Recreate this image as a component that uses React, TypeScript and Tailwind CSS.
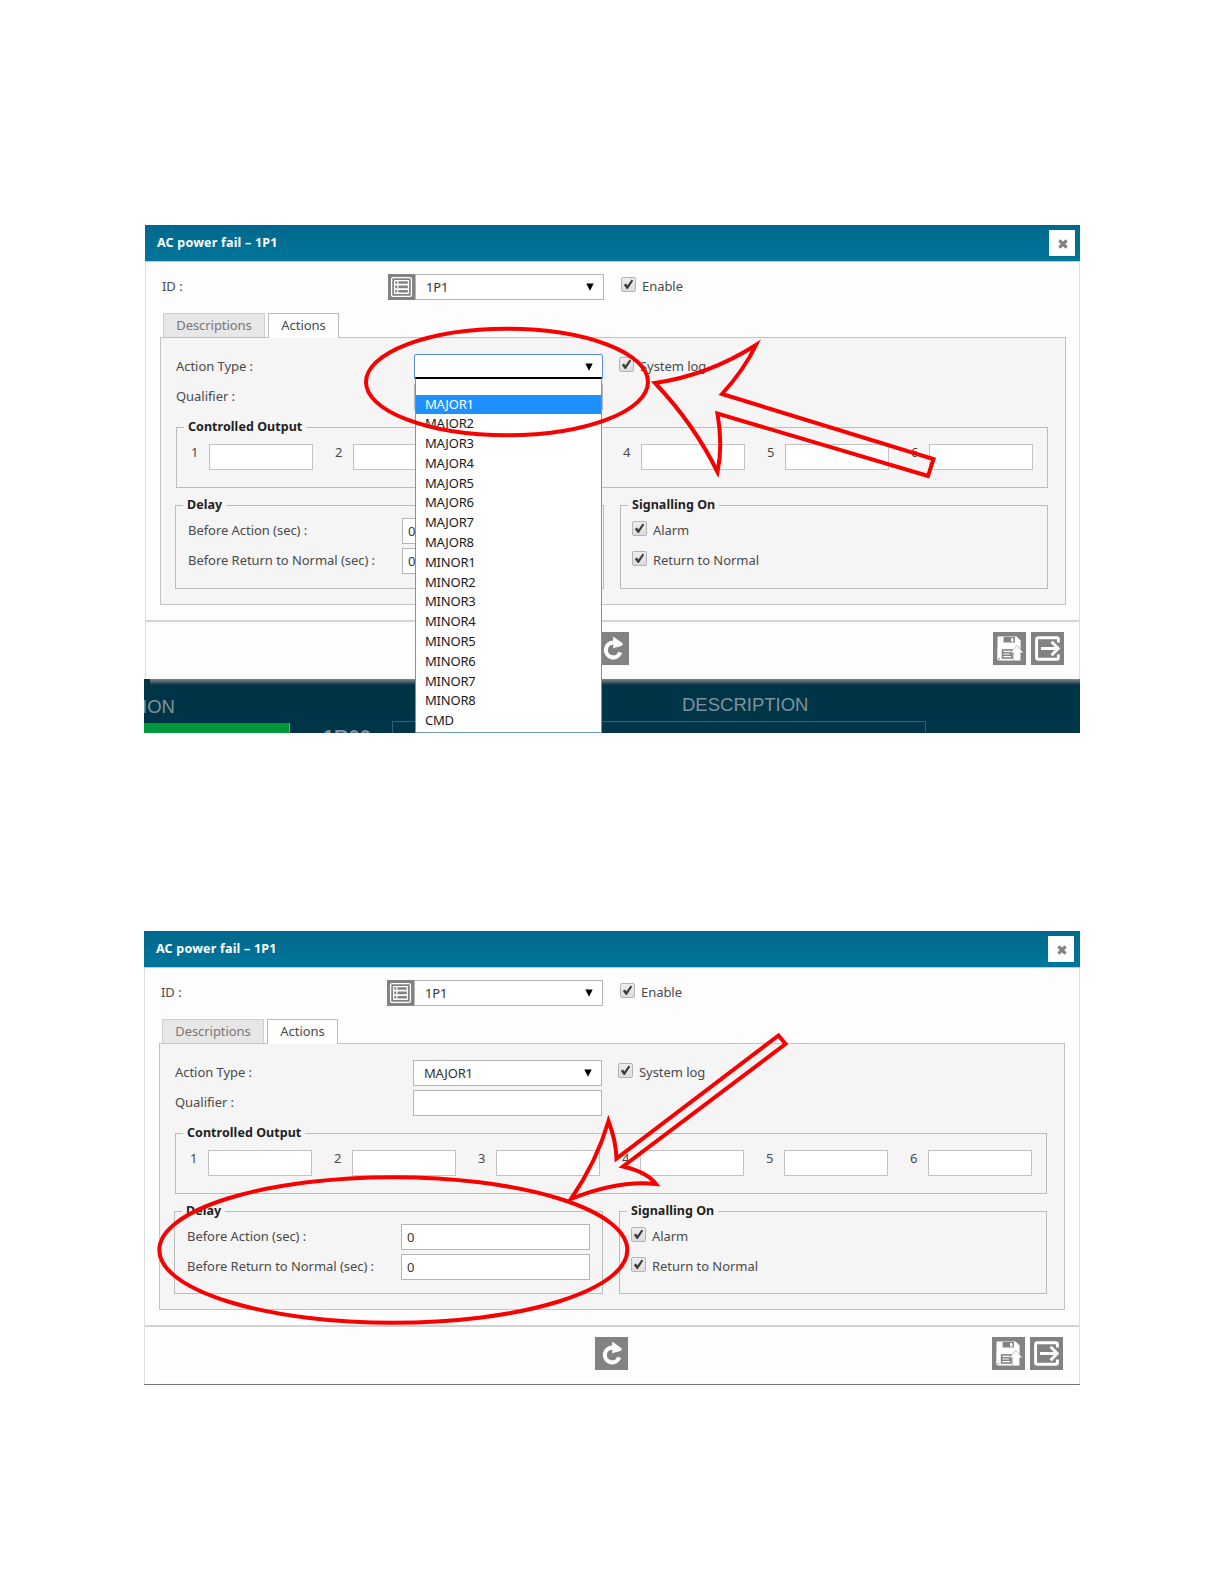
import type { ReactNode } from "react";

const OPTIONS = [
  "MAJOR1", "MAJOR2", "MAJOR3", "MAJOR4", "MAJOR5", "MAJOR6", "MAJOR7", "MAJOR8",
  "MINOR1", "MINOR2", "MINOR3", "MINOR4", "MINOR5", "MINOR6", "MINOR7", "MINOR8", "CMD",
];

function Check({ label }: { label: string }) {
  return (
    <div className="flex h-[26px] items-start gap-[6px]">
      <span className="mt-[3px] flex h-[15px] w-[15px] shrink-0 items-center justify-center rounded-[2px] border border-[#b4b4b4] bg-linear-to-b from-[#eeeeee] to-[#dcdcdc]">
        <svg width="11" height="11" viewBox="0 0 11 11">
          <path d="M0.8 6 L3 4.6 L4.4 6.4 L8.6 0.6 L10.2 1.8 L4.8 10 L3.8 10 Z" fill="#3c3c3c" />
        </svg>
      </span>
      <span className="leading-[25px] whitespace-nowrap">{label}</span>
    </div>
  );
}

function Select({ value, focus, children }: { value: string; focus?: boolean; children?: ReactNode }) {
  return (
    <div
      className={`relative flex h-[26px] w-[189px] items-center justify-between border bg-white pr-[9px] pl-[10px] text-[#333] ${
        focus ? "rounded-[2px] border-[#5b8def]" : "border-[#b5b5b5]"
      }`}
    >
      <span className="pt-px text-[13px] tracking-[-0.2px]">{value}</span>
      <svg width="8" height="8" viewBox="0 0 8 8" className="mb-px">
        <path d="M0.3 0.4 H7.7 L4 7.8 Z" fill="#000" />
      </svg>
      {children}
    </div>
  );
}

function OptionList() {
  return (
    <div className="absolute top-[22px] left-0 z-10 h-[356px] w-[187px] border border-[#6f96c4] border-t-2 border-t-black bg-white pt-[15.5px]">
      {OPTIONS.map((o, i) => (
        <div
          key={o}
          className={`h-[19.8px] pl-[9px] text-[13px] leading-[19.8px] tracking-[-0.2px] ${
            i === 0 ? "bg-[#1e90ff] text-white" : "text-[#1a1a1a]"
          }`}
        >
          {o}
        </div>
      ))}
    </div>
  );
}

function Group({ title, className, children }: { title: string; className: string; children: ReactNode }) {
  return (
    <fieldset className={`border border-[#bcbcbc] ${className}`}>
      <legend className="ml-[7px] h-4 px-[4px] text-[12.5px] leading-4 font-bold tracking-[0.05px] text-[#222]">{title}</legend>
      {children}
    </fieldset>
  );
}

function ListIcon() {
  return (
    <svg width="27" height="26" viewBox="0 0 27 26" className="shrink-0">
      <rect width="27" height="26" fill="#828282" />
      <rect x="3.6" y="3.6" width="19.8" height="18.8" rx="1.5" fill="none" stroke="#fff" strokeWidth="1.3" />
      <rect x="6" y="6" width="15" height="14" rx="1" fill="#fff" />
      <path d="M7.2 7.2h2v2.6h-2z M10.4 7.2h9.4v2.6h-9.4z M7.2 11.6h2v2.6h-2z M10.4 11.6h9.4v2.6h-9.4z M7.2 16h2v2.6h-2z M10.4 16h9.4v2.6h-9.4z" fill="#828282" />
    </svg>
  );
}

function ReloadIcon() {
  return (
    <svg width="33" height="33" viewBox="0 0 33 33">
      <rect width="33" height="33" fill="#828282" />
      <path d="M17.5 10.6 A7.4 7.4 0 1 0 24.2 20.4" fill="none" stroke="#fff" strokeWidth="4.2" />
      <path d="M17.2 4.4 L26.8 11.6 L26 13.8 L17.2 16.2 Z" fill="#fff" />
    </svg>
  );
}

function SaveIcon() {
  return (
    <svg width="33" height="33" viewBox="0 0 33 33">
      <rect width="33" height="33" fill="#828282" />
      <path d="M4.6 4.4 H23.6 L27.6 8.6 V28.4 H5.6 L4.2 27 Z" fill="#fff" />
      <rect x="10.6" y="5" width="11.4" height="5.6" rx="0.6" fill="#828282" />
      <rect x="18" y="6" width="2.6" height="3.8" rx="1" fill="#fff" />
      <rect x="8.8" y="17.2" width="11" height="9.6" fill="#828282" />
      <path d="M10.4 19.4 H18 M10.4 22 H17 M10.4 24.6 H18" stroke="#fff" strokeWidth="1.1" />
      <path d="M23.9 13.4 L30.6 20.8 H27.6 V28.8 H20.6 V20.8 H17.2 Z" fill="#fff" stroke="#828282" strokeWidth="0.5" />
      <rect x="5.4" y="26" width="1.4" height="1.2" fill="#828282" />
    </svg>
  );
}

function ExitIcon() {
  return (
    <svg width="33" height="33" viewBox="0 0 33 33">
      <rect width="33" height="33" fill="#828282" />
      <path d="M27.4 10.6 V7.6 Q27.4 5.8 25.6 5.8 H7.4 Q5.6 5.8 5.6 7.6 V25.4 Q5.6 27.2 7.4 27.2 H25.6 Q27.4 27.2 27.4 25.4 V22.6" fill="none" stroke="#fff" strokeWidth="2.9" />
      <path d="M10 16.5 H26" stroke="#fff" strokeWidth="3" />
      <path d="M20.6 9.8 L27.2 16.5 L20.6 23.2" fill="none" stroke="#fff" strokeWidth="3" />
    </svg>
  );
}

function Dialog({ open }: { open?: boolean }) {
  return (
    <div
      className={`border-x border-[#dcdfe0] bg-[#fdfdfd] text-[13px] tracking-[-0.05px] text-[#4a4a4a] ${
        open ? "h-[454px] w-[935px]" : "h-[453px] w-[936px]"
      }`}
    >
      <div className={`-mx-px flex h-[37px] items-center justify-between border-b border-[#a5d5e2] bg-linear-to-b from-[#00688c] to-[#00769b] pl-[12px] ${open ? "pr-[5px]" : "pr-[6px]"}`}>
        <span className="pt-px text-[12.5px] font-bold tracking-[0.2px] text-white">AC power fail – 1P1</span>
        <span className="flex h-[26px] w-[26px] items-center justify-center bg-white pt-[2px] pl-[2px]">
          <svg width="10" height="10" viewBox="0 0 10 10">
            <path d="M1.4 1.4 L8.6 8.6 M8.6 1.4 L1.4 8.6" stroke="#828282" strokeWidth="3.2" />
          </svg>
        </span>
      </div>

      <div className="flex h-[38px] pt-3 pl-4">
        <span className="w-[226px] leading-[25px]">ID :</span>
        <ListIcon />
        <Select value="1P1" />
        <div className="ml-[17px]">
          <Check label="Enable" />
        </div>
      </div>

      <div className="relative z-[1] mt-[13px] -mb-px ml-[17px] flex h-[25px] gap-[3px]">
        <span className="mb-px w-[102px] border border-b-0 border-[#cfcfcf] bg-[#e7e7e7] text-center leading-[22px] text-[#777]">Descriptions</span>
        <span className="w-[71px] border border-b-0 border-[#bcbcbc] bg-white text-center leading-[22px]">Actions</span>
      </div>

      <div className={`ml-[14px] w-[906px] border border-[#c3c3c3] bg-[#f5f5f5] pt-4 pl-[14px] ${open ? "h-[268px]" : "h-[267px]"}`}>
        <div className="flex">
          <span className="ml-[1px] w-[238px] leading-[25px]">Action Type :</span>
          <Select value={open ? "" : "MAJOR1"} focus={open}>
            {open && <OptionList />}
          </Select>
          <div className="ml-[16px]">
            <Check label="System log" />
          </div>
        </div>
        <div className="mt-1 flex">
          <span className="ml-[1px] w-[238px] leading-[25px]">Qualifier :</span>
          <span className="h-[26px] w-[189px] border border-[#b5b5b5] bg-white" />
        </div>

        <Group title="Controlled Output" className="mt-[9px] ml-[1px] h-[69px] w-[872px]">
          <div className="flex gap-[22px] pt-[9px] pl-[14px]">
            {[1, 2, 3, 4, 5, 6].map((n) => (
              <div key={n} className="flex w-[122px] justify-between">
                <span className="leading-[17px]">{n}</span>
                <span className="h-[26px] w-[104px] border border-[#c3c3c3] bg-white" />
              </div>
            ))}
          </div>
        </Group>

        <div className="mt-[9px] flex gap-[16px]">
          <Group title="Delay" className={`w-[429px] ${open ? "h-[92px]" : "h-[91px]"}`}>
            <div className="flex flex-col gap-1 pt-[5px] pl-[12px]">
              {["Before Action (sec) :", "Before Return to Normal (sec) :"].map((t) => (
                <div key={t} className="flex">
                  <span className="w-[214px] leading-[25px]">{t}</span>
                  <span className="h-[26px] w-[189px] border border-[#b5b5b5] bg-white pl-[5px] leading-[25px] text-[#333]">0</span>
                </div>
              ))}
            </div>
          </Group>
          <Group title="Signalling On" className={`w-[428px] ${open ? "h-[92px]" : "h-[91px]"}`}>
            <div className="flex flex-col gap-1 pt-[5px] pl-[11px]">
              <Check label="Alarm" />
              <Check label="Return to Normal" />
            </div>
          </Group>
        </div>
      </div>

      <div className="mt-[15px] flex h-[59px] border-t-2 border-[#d3d3d3] pt-[10px] pl-[450px]">
        <ReloadIcon />
        <div className="ml-[364px] flex gap-[5px]">
          <SaveIcon />
          <ExitIcon />
        </div>
      </div>
    </div>
  );
}

function Backdrop() {
  return (
    <div className="h-[54px] w-[936px] overflow-hidden bg-[#003547] font-['Liberation_Sans',Arial,sans-serif] text-[18.5px] text-[#7f929b]">
      <div className="ml-[6px] h-[6px] bg-linear-to-b from-[#85858a] to-[#003547]" />
      <div className="flex h-[36px]">
        <span className="-ml-[2px] w-[540px] pt-[8px] leading-[28px] whitespace-nowrap">ION</span>
        <span className="pt-[6px] leading-[28px]">DESCRIPTION</span>
      </div>
      <div className="flex items-start">
        <span className="mt-[2px] h-[12px] w-[146px] border-r border-[#5fae80] bg-[#00973a]" />
        <span className="mt-[8px] ml-[33px] w-[69px] text-[20px] leading-[16px] font-bold">1R00</span>
        <span className="h-[30px] w-[534px] border border-[#385f6e]" />
      </div>
    </div>
  );
}

function Annotations() {
  return (
    <svg
      width="1224"
      height="1584"
      viewBox="0 0 1224 1584"
      className="pointer-events-none absolute top-0 left-0 z-20"
      fill="none"
      stroke="#f80000"
      strokeWidth="4"
      strokeMiterlimit="6"
    >
      <ellipse cx="507" cy="382" rx="141" ry="53.3" />
      <path d="M655 383 Q709 375 756 345 Q744 370 722 394 L933.5 459 L928 476 L717.5 413.5 Q723 446 717.5 472 Q694 424 655 383 Z" />
      <ellipse cx="393.3" cy="1250" rx="234" ry="72.8" />
      <path d="M571 1199 Q597 1161 608.5 1121 Q616 1141 616.5 1158.5 L778.5 1035.5 L785.5 1044 L623 1166.5 Q647 1172 656 1184 Q618 1180 571 1199 Z" />
    </svg>
  );
}

export default function App() {
  return (
    <div className="relative h-[1584px] w-[1224px] overflow-hidden bg-white pt-[225px] font-['Noto_Sans',sans-serif]">
      <div className="ml-[144px] h-[508px] w-[936px]">
        <div className="pl-px">
          <Dialog open />
        </div>
        <Backdrop />
      </div>
      <div className="mt-[198px] ml-[144px] w-[936px] border-b border-[#707a7d]">
        <Dialog />
      </div>
      <Annotations />
    </div>
  );
}
